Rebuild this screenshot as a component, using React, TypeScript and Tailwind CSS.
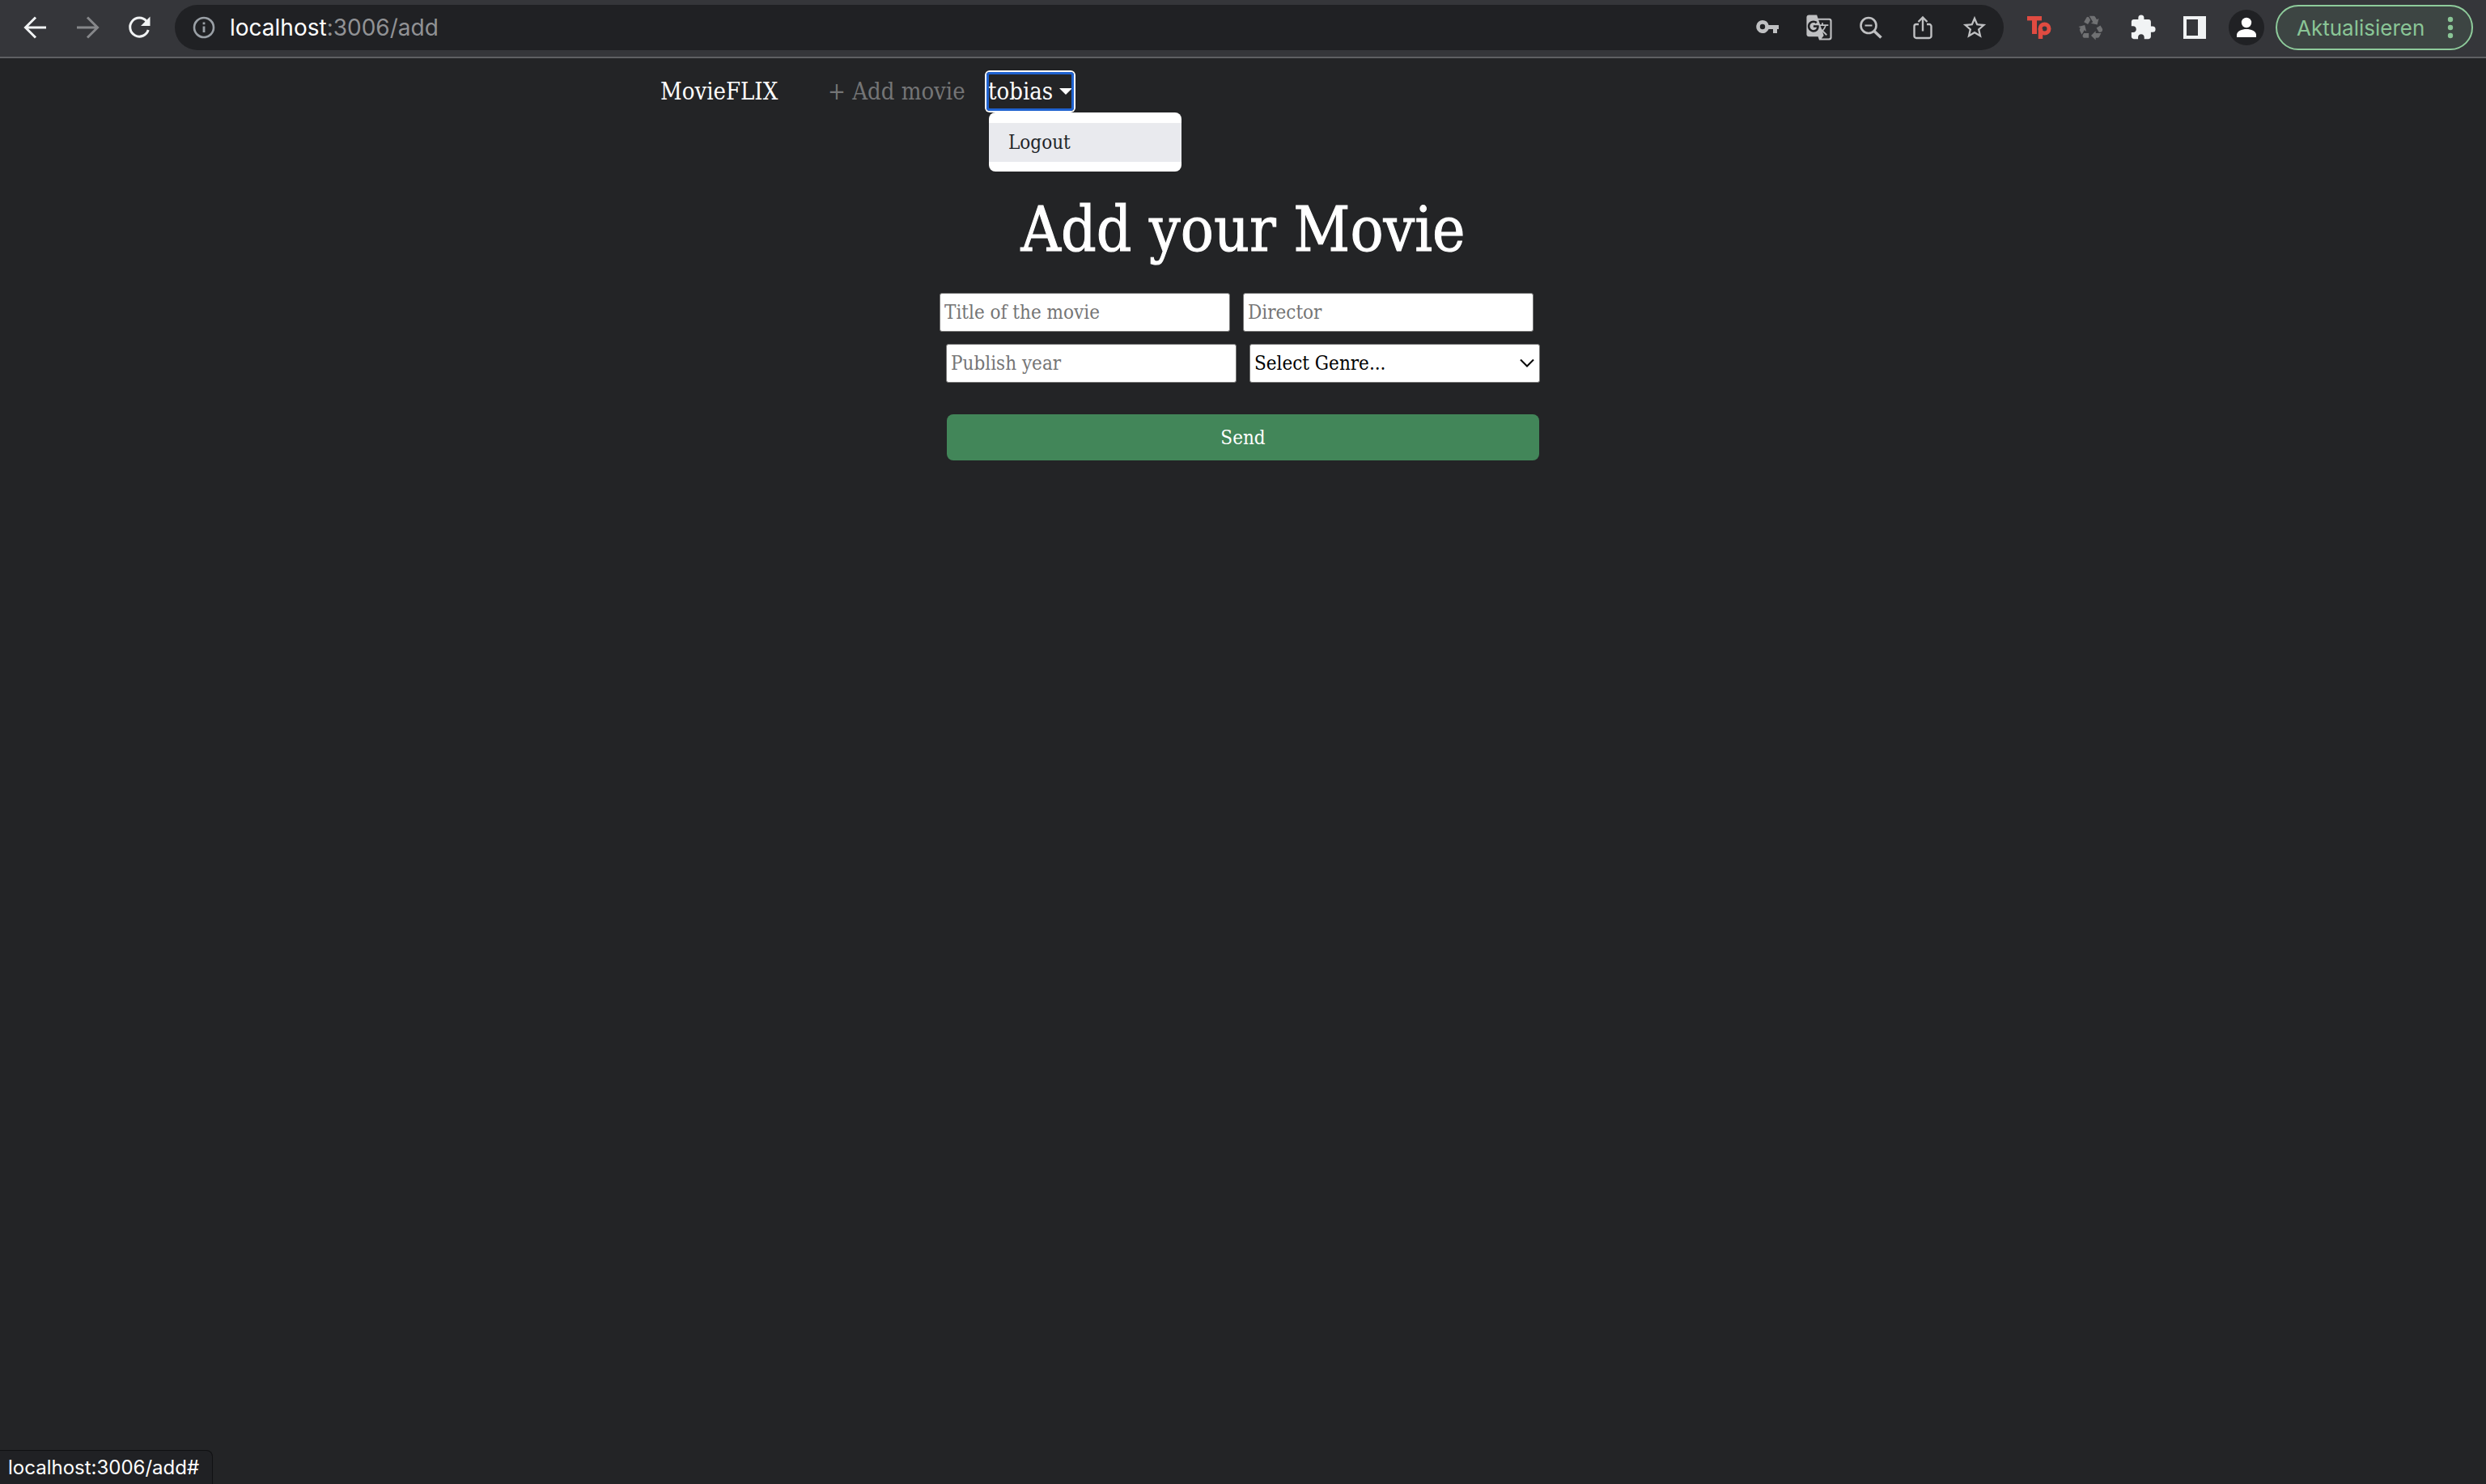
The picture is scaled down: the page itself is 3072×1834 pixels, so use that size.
import type { ReactNode } from "react";
import { MdGTranslate, MdRecycling, MdStarBorder, MdExtension } from "react-icons/md";

const slab = "font-['DejaVu_Serif_Condensed','DejaVu_Serif',serif]";

function ToolbarButton({ label, children }: { label: string; children: ReactNode }) {
  return (
    <button type="button" aria-label={label} className="flex size-16 shrink-0 items-center justify-center">
      {children}
    </button>
  );
}

const icon = "size-9";

function BrowserBar() {
  return (
    <header className="flex h-[72px] items-center border-b-2 border-[#5f6063] bg-[#35363a] pr-4 pb-[2px] pl-3 text-[#f1f3f4]">
      <ToolbarButton label="Back">
        <svg className={icon} viewBox="0 0 36 36" fill="none" stroke="currentColor" strokeWidth="3">
          <path d="M31 18H6M18 5.500L5.500 18L18 30.500" strokeLinejoin="miter" />
        </svg>
      </ToolbarButton>
      <ToolbarButton label="Forward">
        <svg className="size-9 text-[#86878a]" viewBox="0 0 36 36" fill="none" stroke="currentColor" strokeWidth="3">
          <path d="M5 18H30M18 5.500L30.500 18L18 30.500" />
        </svg>
      </ToolbarButton>
      <ToolbarButton label="Reload">
        <svg className={icon} viewBox="0 0 36 36" fill="none">
          <path d="M27 10.200A11.500 11.500 0 1 0 29.200 21" stroke="currentColor" strokeWidth="3" />
          <path d="M31.500 4.500V16H20z" fill="currentColor" />
        </svg>
      </ToolbarButton>

      <div className="ml-3 flex h-14 min-w-0 flex-1 items-center rounded-full bg-[#202124] pr-1 pl-5 text-[#bfc0c2]">
        <svg className="size-8 shrink-0 text-[#9aa0a6]" viewBox="0 0 32 32" fill="none">
          <circle cx="16" cy="16" r="12" stroke="currentColor" strokeWidth="2.600" />
          <path d="M16 14.500V22M16 9.500V12.300" stroke="currentColor" strokeWidth="2.800" />
        </svg>
        <div className="ml-4 min-w-0 flex-1 font-[Inter,sans-serif] text-[28px] leading-9 text-[#919295]">
          <span className="text-white">localhost</span>:3006/add
        </div>
        <ToolbarButton label="Passwords">
          <svg className={icon} viewBox="0 0 36 36" fill="currentColor">
            <path fillRule="evenodd" d="M12 9a8 8 0 1 0 7.600 11H25v5h5v-5h2v-5H19.600A8 8 0 0 0 12 9zm0 4.800a3.200 3.200 0 1 1 0 6.400a3.200 3.200 0 0 1 0-6.400z" />
          </svg>
        </ToolbarButton>
        <ToolbarButton label="Translate">
          <MdGTranslate className="size-[34px]" />
        </ToolbarButton>
        <ToolbarButton label="Zoom">
          <svg className={icon} viewBox="0 0 36 36" fill="none" stroke="currentColor">
            <circle cx="15" cy="15.500" r="9.500" strokeWidth="2.600" />
            <path d="M10.500 15.500h9" strokeWidth="2" />
            <path d="M22 22.500l8.500 8" strokeWidth="3.600" />
          </svg>
        </ToolbarButton>
        <ToolbarButton label="Share">
          <svg className={icon} viewBox="0 0 36 36" fill="none" stroke="currentColor" strokeWidth="2.400">
            <path d="M13 14H10a2.500 2.500 0 0 0-2.500 2.500v12A2.500 2.500 0 0 0 10 31h16a2.500 2.500 0 0 0 2.500-2.500v-12A2.500 2.500 0 0 0 26 14h-3" />
            <path d="M18 22.500V6M12.500 11L18 5.500L23.500 11" />
          </svg>
        </ToolbarButton>
        <ToolbarButton label="Bookmark">
          <MdStarBorder className="size-[34px]" />
        </ToolbarButton>
      </div>

      <div className="ml-3 flex items-center">
        <ToolbarButton label="Tp extension">
          <svg className={icon} viewBox="0 0 36 36" fill="none" stroke="#e04b41">
            <path d="M3 6.700H21" strokeWidth="5.400" />
            <path d="M12 5V26" strokeWidth="6" />
            <path d="M19.500 32V19.500" strokeWidth="5.500" />
            <circle cx="24.500" cy="19.500" r="5.500" strokeWidth="5" />
          </svg>
        </ToolbarButton>
        <ToolbarButton label="Recycle extension">
          <MdRecycling className="size-[34px] text-[#707173]" />
        </ToolbarButton>
        <ToolbarButton label="Extensions">
          <MdExtension className="size-[34px]" />
        </ToolbarButton>
        <ToolbarButton label="Side panel">
          <svg className={icon} viewBox="0 0 36 36" fill="currentColor">
            <path fillRule="evenodd" d="M4 4h28v28H4zM8 8v20h14V8z" />
          </svg>
        </ToolbarButton>
        <ToolbarButton label="Profile">
          <svg className="size-11 rounded-full bg-[#202124]" viewBox="0 0 44 44" fill="#fff">
            <circle cx="22" cy="16" r="6.200" />
            <path d="M10 34v-3c0-4.500 6.500-7 12-7s12 2.500 12 7v3z" />
          </svg>
        </ToolbarButton>
      </div>

      <button
        type="button"
        className="ml-1 flex h-14 w-[244px] items-center justify-between rounded-full border-2 border-[#8ecb9b] bg-[#3d4543] pr-5 pl-6 font-[Inter,sans-serif] text-[26px] text-[#8ac596]"
      >
        Aktualisieren
        <svg className="h-8 w-3" viewBox="0 0 12 32" fill="currentColor">
          <circle cx="6" cy="6" r="3.200" />
          <circle cx="6" cy="16" r="3.200" />
          <circle cx="6" cy="26" r="3.200" />
        </svg>
      </button>
    </header>
  );
}

function SiteNav() {
  return (
    <nav className="mx-auto flex h-[92px] w-full max-w-[1440px] items-start pt-[17px] text-[29px] leading-[48px] text-white">
      <a href="#home" className="w-[207px]">MovieFLIX</a>
      <a href="#add" className="w-[196px] text-[#747576]">+ Add movie</a>
      <div className="relative">
        <button
          type="button"
          aria-expanded="true"
          className="flex h-12 items-center gap-2 rounded-[4px] pr-[2px] pl-[2px] ring-2 ring-white outline-3 -outline-offset-3 outline-[#1f62d0]"
        >
          tobias
          <svg className="h-2 w-4" viewBox="0 0 16 8" fill="currentColor">
            <path d="M0 0h16l-8 8z" />
          </svg>
        </button>
        <div className="absolute top-[50px] left-[3px] w-[238px] rounded-lg bg-white pt-[13px] pb-3">
          <a href="#logout" className="block bg-[#e9eaee] px-6 text-2xl leading-[48px] text-[#212529]">Logout</a>
        </div>
      </div>
    </nav>
  );
}

const field = "h-12 w-[359px] rounded-[3px] border border-[#767676] bg-white px-[5px] text-2xl text-black placeholder:text-[#757575]";

function MovieForm() {
  return (
    <main className="flex flex-col items-center pt-[72px]">
      <h1 className="text-[76px] leading-[96px] text-white [-webkit-text-stroke:1px_white]">Add your Movie</h1>
      <form className="mt-[30px] flex flex-col items-center" onSubmit={(e) => e.preventDefault()}>
        <div className="flex gap-4 pr-4">
          <input className={field} aria-label="Title of the movie" placeholder="Title of the movie" />
          <input className={field} aria-label="Director" placeholder="Director" />
        </div>
        <div className="mt-[15px] flex gap-4">
          <input className={field} aria-label="Publish year" placeholder="Publish year" />
          <div className="relative">
            <select className={`${field} appearance-none`} aria-label="Genre">
              <option>Select Genre...</option>
            </select>
            <svg className="pointer-events-none absolute top-4 right-1.5 h-4 w-5" viewBox="0 0 20 16" fill="none" stroke="#000" strokeWidth="2">
              <path d="M2 3.500l8 8l8-8" />
            </svg>
          </div>
        </div>
        <button type="submit" className="mt-[39px] h-[57px] w-[732px] rounded-lg bg-[#428659] text-2xl text-white">
          Send
        </button>
      </form>
    </main>
  );
}

export default function App() {
  return (
    <div className={`min-h-screen bg-[#232426] ${slab}`}>
      <BrowserBar />
      <SiteNav />
      <MovieForm />
      <div className="fixed bottom-0 left-0 h-[42px] rounded-tr-lg border-t border-r border-[#101113] bg-[#202124] pr-4 pl-[10px] font-[Inter,sans-serif] text-[24px] leading-[42px] text-white">
        localhost:3006/add#
      </div>
    </div>
  );
}
